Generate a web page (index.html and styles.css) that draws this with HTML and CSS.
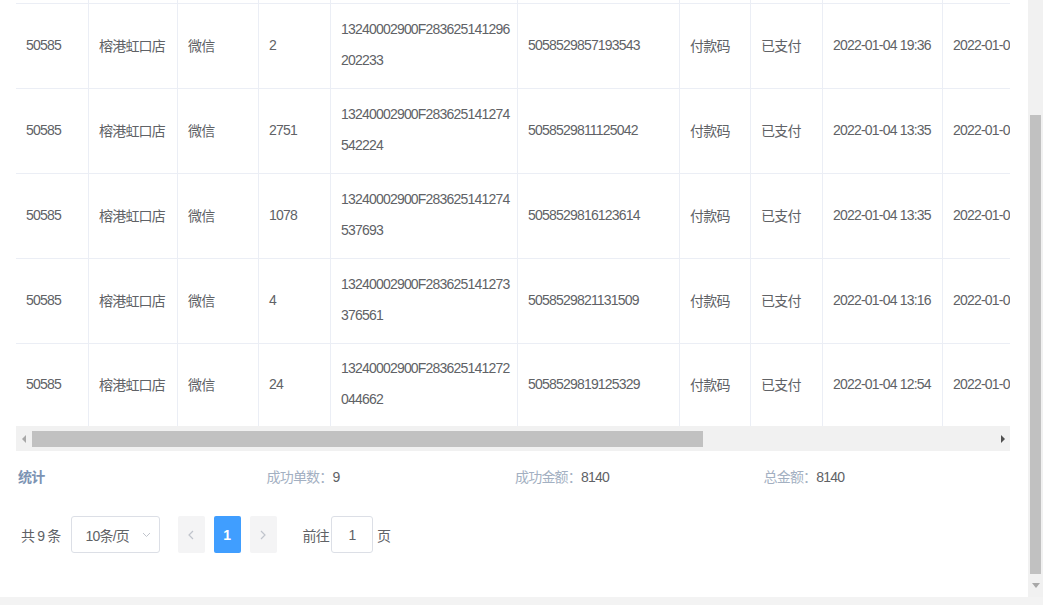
FILE: index.html
```html
<!DOCTYPE html>
<html lang="zh-CN">
<head>
<meta charset="utf-8">
<title>订单列表</title>
<link rel="stylesheet" href="styles.css">
</head>
<body>
<div class="screen">
  <div class="main">
    <div class="content">
      <div class="table-wrap">
        <div class="table">
          <div class="row spacer">
            <div class="cell"></div><div class="cell"></div><div class="cell"></div><div class="cell"></div><div class="cell"></div><div class="cell"></div><div class="cell"></div><div class="cell"></div><div class="cell"></div><div class="cell"></div>
          </div>
          <div class="row">
            <div class="cell">50585</div><div class="cell">榕港虹口店</div><div class="cell">微信</div><div class="cell">2</div>
            <div class="cell multi">13240002900F283625141296<br>202233</div>
            <div class="cell">5058529857193543</div><div class="cell">付款码</div><div class="cell">已支付</div>
            <div class="cell">2022-01-04 19:36</div><div class="cell">2022-01-04 19:36</div>
          </div>
          <div class="row">
            <div class="cell">50585</div><div class="cell">榕港虹口店</div><div class="cell">微信</div><div class="cell">2751</div>
            <div class="cell multi">13240002900F283625141274<br>542224</div>
            <div class="cell">5058529811125042</div><div class="cell">付款码</div><div class="cell">已支付</div>
            <div class="cell">2022-01-04 13:35</div><div class="cell">2022-01-04 13:35</div>
          </div>
          <div class="row">
            <div class="cell">50585</div><div class="cell">榕港虹口店</div><div class="cell">微信</div><div class="cell">1078</div>
            <div class="cell multi">13240002900F283625141274<br>537693</div>
            <div class="cell">5058529816123614</div><div class="cell">付款码</div><div class="cell">已支付</div>
            <div class="cell">2022-01-04 13:35</div><div class="cell">2022-01-04 13:35</div>
          </div>
          <div class="row">
            <div class="cell">50585</div><div class="cell">榕港虹口店</div><div class="cell">微信</div><div class="cell">4</div>
            <div class="cell multi">13240002900F283625141273<br>376561</div>
            <div class="cell">5058529821131509</div><div class="cell">付款码</div><div class="cell">已支付</div>
            <div class="cell">2022-01-04 13:16</div><div class="cell">2022-01-04 13:16</div>
          </div>
          <div class="row last">
            <div class="cell">50585</div><div class="cell">榕港虹口店</div><div class="cell">微信</div><div class="cell">24</div>
            <div class="cell multi">13240002900F283625141272<br>044662</div>
            <div class="cell">5058529819125329</div><div class="cell">付款码</div><div class="cell">已支付</div>
            <div class="cell">2022-01-04 12:54</div><div class="cell">2022-01-04 12:54</div>
          </div>
        </div>
      </div>

      <div class="hscroll">
        <div class="hbtn"><svg width="5" height="8" viewBox="0 0 5 8"><path d="M4 0 L0 4 L4 8 Z" fill="#a8a8a8"/></svg></div>
        <div class="htrack"><div class="hthumb"></div></div>
        <div class="hbtn"><svg width="5" height="8" viewBox="0 0 5 8"><path d="M1 0 L5 4 L1 8 Z" fill="#505050"/></svg></div>
      </div>

      <div class="stats">
        <div class="stat title">统计</div>
        <div class="stat"><span class="label">成功单数：</span><span class="value">9</span></div>
        <div class="stat"><span class="label">成功金额：</span><span class="value">8140</span></div>
        <div class="stat"><span class="label">总金额：</span><span class="value">8140</span></div>
      </div>

      <div class="pager">
        <span class="total">共 9 条</span>
        <div class="sizes">
          <span>10条/页</span>
          <svg width="9" height="6" viewBox="0 0 9 6"><path d="M1 1 L4.5 4.5 L8 1" fill="none" stroke="#c0c4cc" stroke-width="1"/></svg>
        </div>
        <button class="pbtn" type="button"><svg width="6" height="10" viewBox="0 0 6 10"><path d="M5 1 L1 5 L5 9" fill="none" stroke="#c0c4cc" stroke-width="1.2"/></svg></button>
        <button class="pbtn active" type="button">1</button>
        <button class="pbtn" type="button"><svg width="6" height="10" viewBox="0 0 6 10"><path d="M1 1 L5 5 L1 9" fill="none" stroke="#c0c4cc" stroke-width="1.2"/></svg></button>
        <span class="goto">前往</span>
        <div class="jump">1</div>
        <span class="page-unit">页</span>
      </div>
    </div>

    <div class="vscroll">
      <div class="vthumb"></div>
      <div class="vbtn"><svg width="8" height="5" viewBox="0 0 8 5"><path d="M0 0 L8 0 L4 5 Z" fill="#a8a8a8"/></svg></div>
    </div>
  </div>
  <div class="bottom-strip"></div>
</div>
</body>
</html>
```

FILE: styles.css
```css
html, body {
  margin: 0;
  padding: 0;
  background: #ffffff;
  overflow: hidden;
}

body {
  font-family: "Liberation Sans", "Noto Sans CJK SC", sans-serif;
  font-size: 14px;
  letter-spacing: -0.8px;
  color: #606266;
}

.screen {
  width: 1043px;
  height: 605px;
  display: flex;
  flex-direction: column;
}

.main {
  height: 597px;
  display: flex;
}

.content {
  width: 994px;
  padding: 0 18px 0 16px;
  display: flex;
  flex-direction: column;
}

.table-wrap {
  width: 994px;
  overflow: hidden;
}

.table {
  width: 1087px;
}

.row {
  display: grid;
  grid-template-columns: 73px 89px 81px 72px 187px 162px 71px 72px 120px 160px;
  height: 85px;
}

.row.spacer {
  height: 4px;
}

.row.last {
  height: 82px;
}

.cell {
  box-sizing: border-box;
  border-right: 1px solid #ebeef5;
  border-bottom: 1px solid #ebeef5;
  padding: 0 10px 3px 10px;
  display: flex;
  align-items: center;
  white-space: nowrap;
  overflow: hidden;
}

.row.spacer .cell {
  padding: 0;
}

.row.last .cell {
  border-bottom: none;
}

.cell.multi {
  line-height: 31px;
  padding-bottom: 2px;
}

.hscroll {
  height: 25px;
  background: #f1f1f1;
  display: flex;
  align-items: center;
}

.hbtn {
  width: 16px;
  height: 25px;
  display: flex;
  align-items: center;
  justify-content: center;
}

.htrack {
  flex: 1;
  height: 16px;
}

.hthumb {
  width: 671px;
  height: 16px;
  background: #c1c1c1;
}

.stats {
  display: grid;
  grid-template-columns: repeat(4, 1fr);
  height: 50px;
  align-items: center;
}

.stat {
  padding-left: 2px;
}

.stat.title {
  color: #7c93b3;
  font-weight: bold;
}

.label {
  color: #a3b0c2;
}

.value {
  color: #606266;
}

.pager {
  margin-top: 15px;
  height: 37px;
  display: flex;
  align-items: center;
  padding-left: 5px;
}

.total {
  margin-right: 10px;
}

.sizes {
  box-sizing: border-box;
  width: 89px;
  height: 37px;
  border: 1px solid #dcdfe6;
  border-radius: 3px;
  display: flex;
  align-items: center;
  justify-content: space-between;
  padding: 0 8px 0 14px;
  margin-right: 18px;
}

.pbtn {
  width: 27px;
  height: 37px;
  border: none;
  border-radius: 2px;
  background: #f4f4f5;
  margin: 0 9px 0 0;
  padding: 0;
  display: flex;
  align-items: center;
  justify-content: center;
  font-family: inherit;
  font-size: 14px;
  font-weight: bold;
  color: #606266;
}

.pbtn.active {
  background: #409eff;
  color: #ffffff;
}

.pbtn:last-of-type {
  margin-right: 26px;
}

.goto {
  margin-right: 2px;
}

.jump {
  box-sizing: border-box;
  width: 42px;
  height: 37px;
  border: 1px solid #dcdfe6;
  border-radius: 3px;
  display: flex;
  align-items: center;
  justify-content: center;
  margin-right: 4px;
}

.vscroll {
  width: 15px;
  background: #f1f1f1;
  display: flex;
  flex-direction: column;
  align-items: center;
  padding-top: 115px;
  box-sizing: border-box;
}

.vthumb {
  width: 11px;
  height: 459px;
  background: #c1c1c1;
}

.vbtn {
  height: 23px;
  width: 15px;
  display: flex;
  align-items: center;
  justify-content: center;
}

.bottom-strip {
  height: 8px;
  background: #f3f3f3;
}
```
